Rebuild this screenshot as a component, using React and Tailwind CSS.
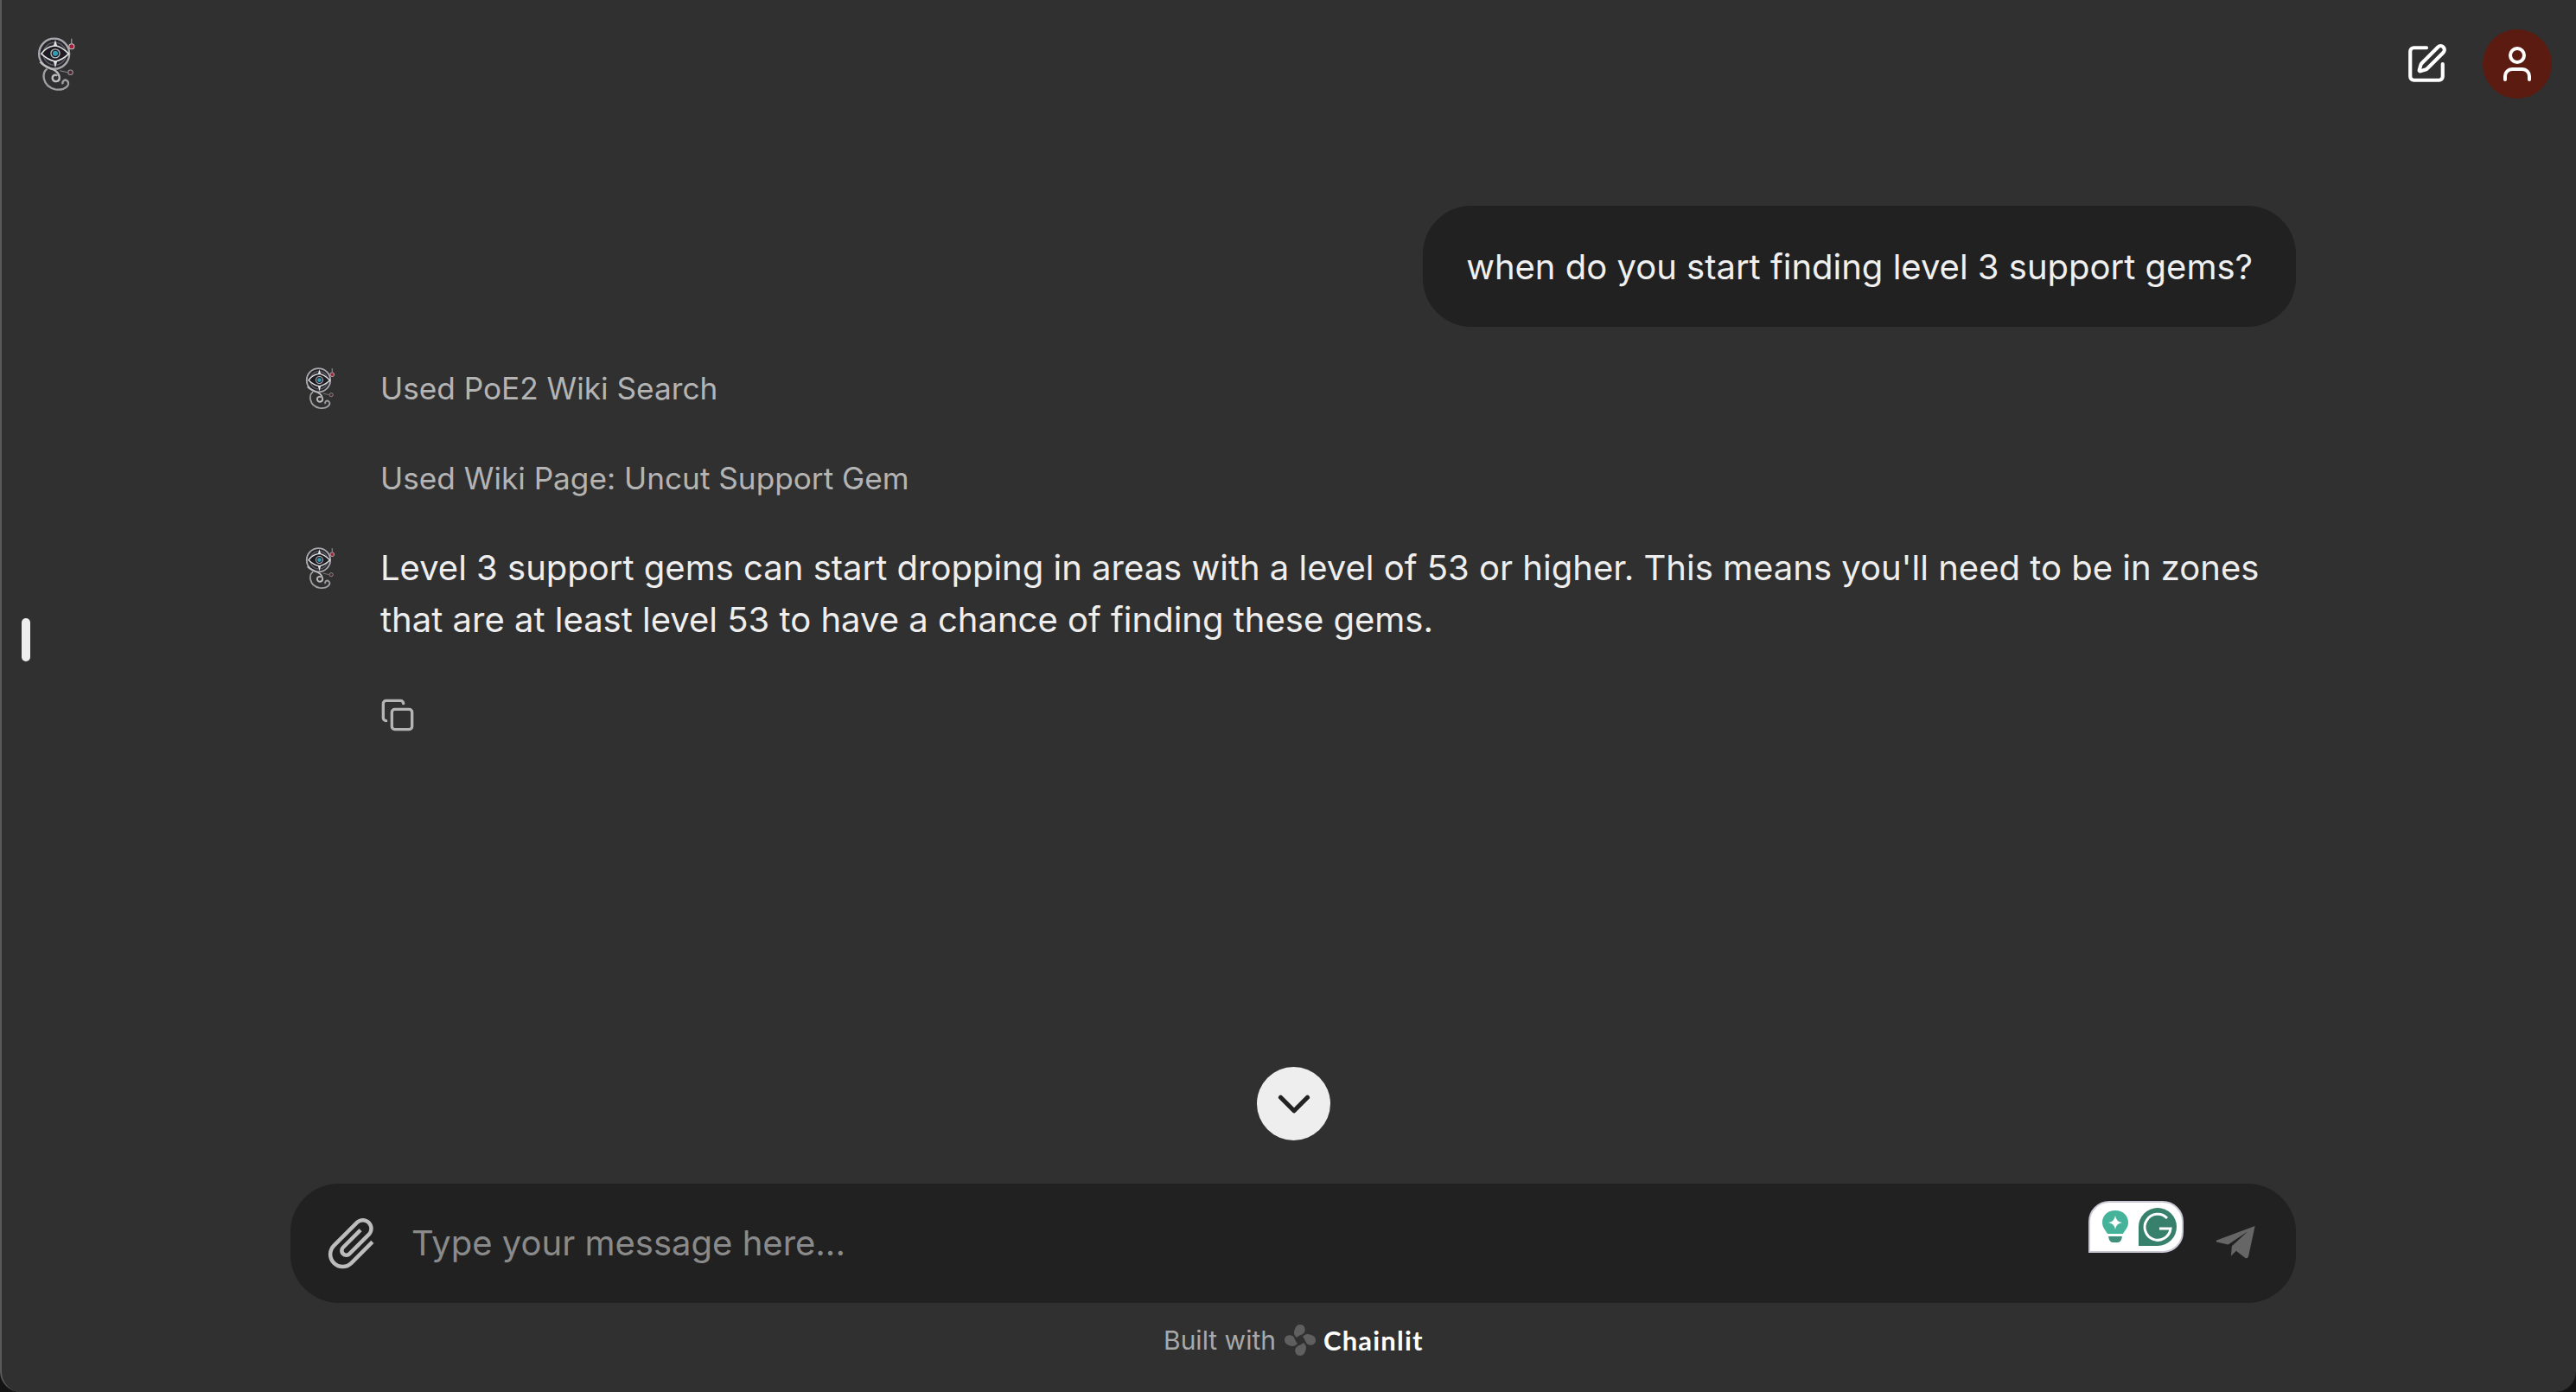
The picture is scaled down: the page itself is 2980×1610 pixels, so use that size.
import React from "react";
import { SquarePen, User, Copy, ChevronDown } from "lucide-react";

// Round eye emblem used as the app logo and the assistant avatar
const Logo = ({ className }) => (
  <svg viewBox="0 0 140 190" className={className} fill="none">
    <circle cx="66" cy="60" r="52" fill="#26262c" stroke="#a9a9ad" strokeWidth="7" />
    <circle cx="68" cy="60" r="39" stroke="#5f5f66" strokeWidth="4" />
    <path d="M22 60 C42 32 60 34 70 32 C84 34 100 44 116 60 C100 76 84 84 70 86 C56 84 40 78 22 60 Z" fill="#1c1c22" stroke="#e2e2e4" strokeWidth="5" />
    <path d="M70 12 L77 34 L63 34 Z M70 108 L77 84 L63 84 Z" fill="#e2e2e4" />
    <circle cx="70" cy="59" r="15" stroke="#b9b9bd" strokeWidth="4" />
    <circle cx="70" cy="59" r="9" fill="#2f9db5" />
    <circle cx="126" cy="35" r="9" fill="#a61d38" stroke="#c9c9cc" strokeWidth="3" />
    <path d="M126 8 V24" stroke="#b5b5b8" strokeWidth="3" />
    <path d="M18 88 C36 112 80 108 84 140 C86 158 62 160 60 144 C60 132 72 130 76 136" stroke="#bdbdc0" strokeWidth="7" />
    <path d="M42 112 C22 122 24 172 70 182 C104 188 122 166 112 154 C102 144 92 156 96 164" stroke="#a0a0a4" strokeWidth="7" />
    <path d="M86 118 L112 124" stroke="#8a8a8e" strokeWidth="3" />
    <circle cx="122" cy="124" r="8" fill="#4c2a30" stroke="#9b9b9f" strokeWidth="3" />
  </svg>
);

const AttachIcon = () => (
  <svg viewBox="0 0 24 24" className="-ml-[5px] w-[72px] h-[72px] rotate-45 text-[#bdbdbd]" fill="currentColor">
    <path d="M16.5 6v11.5c0 2.21-1.79 4-4 4s-4-1.79-4-4V5c0-1.38 1.12-2.5 2.5-2.5s2.5 1.12 2.5 2.5v10.5c0 .55-.45 1-1 1s-1-.45-1-1V6H10v9.5c0 1.38 1.12 2.5 2.5 2.5s2.5-1.12 2.5-2.5V5c0-2.21-1.79-4-4-4S7 2.79 7 5v12.5c0 3.04 2.46 5.5 5.5 5.5s5.5-2.46 5.5-5.5V6h-1.5z" />
  </svg>
);

const SendIcon = () => (
  <svg viewBox="548 172 142 118" className="-mt-[3px] w-[47px] h-[39px]" fill="#666666">
    <path d="M686 175 L552 225 Q547 230 555 232 L592 240 L660 195 L605 245 L602 280 L620 262 L652 287 Q660 290 663 282 Z" />
  </svg>
);

const ChainlitMark = () => (
  <svg viewBox="0 0 38 38" className="w-[38px] h-[38px]" fill="#5f5f5f">
    <path d="M19 1 C24 1 26 6 24 10 C22 13 18 13 15 16 C12 13 11 11 13 6 C14 3 16 1 19 1 Z" />
    <path d="M19 1 C24 1 26 6 24 10 C22 13 18 13 15 16 C12 13 11 11 13 6 C14 3 16 1 19 1 Z" transform="rotate(90 19 19)" />
    <path d="M19 1 C24 1 26 6 24 10 C22 13 18 13 15 16 C12 13 11 11 13 6 C14 3 16 1 19 1 Z" transform="rotate(180 19 19)" />
    <path d="M19 1 C24 1 26 6 24 10 C22 13 18 13 15 16 C12 13 11 11 13 6 C14 3 16 1 19 1 Z" transform="rotate(270 19 19)" />
  </svg>
);

// Browser extension badge sitting over the input
const GrammarlyBadge = () => (
  <div className="absolute left-[2080px] top-[20px] w-[110px] h-[60px] bg-white border-2 border-[#c8c8d4] rounded-t-[24px] rounded-br-[24px] flex items-center justify-between pl-[14px] pr-[6px]">
    <svg viewBox="0 0 30 38" className="w-[30px] h-[38px]">
      <path d="M15 0 C24 0 30 6 30 14 C30 20 26 23 24 27 H6 C4 23 0 20 0 14 C0 6 6 0 15 0 Z" fill="#45b39a" />
      <path d="M15 6 Q16 13 23 14 Q16 15 15 22 Q14 15 7 14 Q14 13 15 6 Z" fill="#ffffff" />
      <path d="M7 30 H23 Q22 37 18 37 H12 Q8 37 7 30 Z" fill="#3f8f7c" />
    </svg>
    <svg viewBox="0 0 44 44" className="w-[44px] h-[44px]">
      <path d="M22 0 A22 22 0 0 1 22 44 H0 V22 A22 22 0 0 1 22 0 Z" fill="#37806c" />
      <path d="M33 12 A15 15 0 1 0 37 24 H24" fill="none" stroke="#ffffff" strokeWidth="3" />
    </svg>
  </div>
);

const StepRow = ({ icon, children }) => (
  <div className="flex items-center h-[60px]">
    <div className="w-[105px] pl-[15px]">{icon && <Logo className="w-[37px] h-[50px]" />}</div>
    <span className="text-[35.2px] -ml-[1px] text-[#b4b4b4]">{children}</span>
  </div>
);

export default function App() {
  return (
    <div className="w-[2980px] h-[1610px] bg-[#141414]">
      <div className="relative w-full h-full bg-[#303030] border-l-2 border-[#5a5a5a] rounded-bl-[24px] rounded-br-[24px] flex flex-col font-['Inter',sans-serif] overflow-hidden">
        {/* Header */}
        <header className="h-[148px] flex items-start justify-between pl-[38px] pr-[28px] pt-[34px] shrink-0">
          <Logo className="mt-[8px] w-[48px] h-[64px]" />
          <div className="flex items-center gap-[40px]">
            <SquarePen size={50} strokeWidth={2} className="text-white" />
            <div className="w-[80px] h-[80px] rounded-full bg-[#5c1b10] flex items-center justify-center">
              <User size={48} strokeWidth={2} className="text-white" />
            </div>
          </div>
        </header>

        {/* Messages */}
        <main className="flex-1 w-[2320px] ml-[334px] flex flex-col">
          <div className="self-end mt-[90px] h-[140px] px-[50px] pt-[1px] flex items-center rounded-[56px] bg-[#212121] text-[40px] text-[#f0f0f0]">
            when do you start finding level 3 support gems?
          </div>

          <div className="mt-[41px]">
            <StepRow icon>Used PoE2 Wiki Search</StepRow>
          </div>
          <div className="mt-[44px]">
            <StepRow>Used Wiki Page: Uncut Support Gem</StepRow>
          </div>

          <div className="flex mt-[44px]">
            <div className="w-[105px] pl-[15px] pt-[5px] shrink-0">
              <Logo className="w-[37px] h-[50px]" />
            </div>
            <div className="-ml-[1px]">
              <p className="text-[40px] leading-[60px] text-[#eeeeee] w-[2200px]">
                Level 3 support gems can start dropping in areas with a level of 53 or higher. This means you'll need to be in zones that are at least level 53 to have a chance of finding these gems.
              </p>
              <Copy size={40} strokeWidth={2} className="mt-[60px] text-[#b4b4b4]" />
            </div>
          </div>
        </main>

        {/* Composer */}
        <div className="relative w-[2320px] ml-[334px] h-[138px] mb-[103px] shrink-0 rounded-[56px] bg-[#212121] flex items-center pl-[40px] pr-[46px]">
          <AttachIcon />
          <input
            placeholder="Type your message here..."
            className="flex-1 ml-[33px] bg-transparent outline-none text-[40px] text-[#eeeeee] placeholder-[#8a8a8a]"
          />
          <SendIcon />
          <GrammarlyBadge />
          <button className="absolute left-[1118px] -top-[135px] w-[85px] h-[85px] rounded-full bg-[#eeeeee] flex items-center justify-center">
            <ChevronDown size={62} strokeWidth={2} className="text-[#222222]" />
          </button>
        </div>

        {/* Footer */}
        <div className="absolute left-[1344px] top-[1531px] flex items-center gap-[9px] h-[38px]">
          <span className="text-[30px] text-[#a8a8a8]">Built with</span>
          <ChainlitMark />
          <span className="-ml-[1px] text-[31px] font-bold tracking-[1.2px] text-white font-['Lato',sans-serif]">Chainlit</span>
        </div>

        {/* Sidebar drag handle */}
        <div className="absolute left-[23px] top-[715px] w-[10px] h-[50px] rounded-full bg-[#eeeeee]" />
      </div>
    </div>
  );
}
